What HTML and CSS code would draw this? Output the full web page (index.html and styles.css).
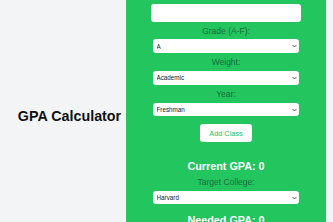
FILE: index.html
```html
<!DOCTYPE html>
<html lang="en">
<head>
    <meta charset="UTF-8">
    <meta name="viewport" content="width=device-width, initial-scale=1.0">
    <title>GPA Calculator</title>
    <link rel="stylesheet" href="styles.css">
</head>
<body>
    <div class="intro">
        <h1>GPA Calculator</h1>
    </div>

    <div class="calculator">
        <label for="className">Class Name:</label>
        <input type="text" id="className">

        <label for="grade">Grade (A-F):</label>
        <select id="grade">
            <option>A</option>
            <option>B</option>
            <option>C</option>
            <option>D</option>
            <option>F</option>
        </select>

        <label for="weight">Weight:</label>
        <select id="weight">
            <option>Academic</option>
            <option>Honors</option>
            <option>AP</option>
        </select>

        <label for="year">Year:</label>
        <select id="year">
            <option>Freshman</option>
            <option>Sophomore</option>
            <option>Junior</option>
            <option>Senior</option>
        </select>

        <button class="add-btn">Add Class</button>

        <h2 class="current">Current GPA: 0</h2>

        <label for="college">Target College:</label>
        <select id="college">
            <option>Harvard</option>
            <option>Stanford</option>
            <option>MIT</option>
            <option>Yale</option>
        </select>

        <h2 class="needed">Needed GPA: 0</h2>
    </div>
</body>
</html>
```

FILE: styles.css
```css
body {
    font-family: 'Liberation Sans', Arial, sans-serif;
    margin: 0;
    height: 100vh;
    background-color: #f3f4f6;
    display: flex;
    align-items: center;
    overflow: hidden;
}

.intro {
    width: 126px;
    flex-shrink: 0;
    padding-left: 13px;
    box-sizing: border-box;
    text-align: center;
    margin-top: 9.7px;
}

h1 {
    margin: 0;
    font-size: 14.3px;
    color: #111;
    white-space: nowrap;
}

.calculator {
    width: 200px;
    flex-shrink: 0;
    box-sizing: border-box;
    background-color: #22c55e;
    padding: 12px 0;
    border-radius: 6px;
    display: flex;
    flex-direction: column;
    align-items: center;
}

label {
    display: block;
    font-size: 8.5px;
    line-height: 10px;
    color: #1a6d3a;
    margin-bottom: 3.7px;
}

input {
    width: 150px;
    height: 18px;
    box-sizing: border-box;
    border: none;
    border-radius: 3px;
    background: #fff;
    margin-bottom: 3.6px;
}

select {
    -webkit-appearance: none;
    appearance: none;
    width: 146px;
    height: 13.5px;
    box-sizing: border-box;
    border: none;
    border-radius: 3px;
    background-color: #fff;
    background-image: url("data:image/svg+xml,%3Csvg xmlns='http://www.w3.org/2000/svg' width='8' height='6' viewBox='0 0 8 6'%3E%3Cpath d='M1 1.5l3 3 3-3' fill='none' stroke='%23444' stroke-width='1.4'/%3E%3C/svg%3E");
    background-repeat: no-repeat;
    background-position: right 2.5px center;
    background-size: 5px 4px;
    font-family: 'Liberation Sans', Arial, sans-serif;
    font-size: 6.3px;
    color: #222;
    padding: 0 0 0 3.5px;
    margin-bottom: 4.5px;
}

.add-btn {
    margin-top: 3.5px;
    height: 17.8px;
    padding: 0 9.2px;
    border: none;
    border-radius: 3px;
    background: #fff;
    color: #22c55e;
    font-family: 'Liberation Sans', Arial, sans-serif;
    font-size: 7.3px;
    cursor: pointer;
}

h2 {
    color: #fff;
    font-size: 10.8px;
    margin: 0;
}

.current {
    margin-top: 18px;
    margin-bottom: 5px;
}

.needed {
    margin-top: 4.8px;
    margin-bottom: 6px;
}
```
